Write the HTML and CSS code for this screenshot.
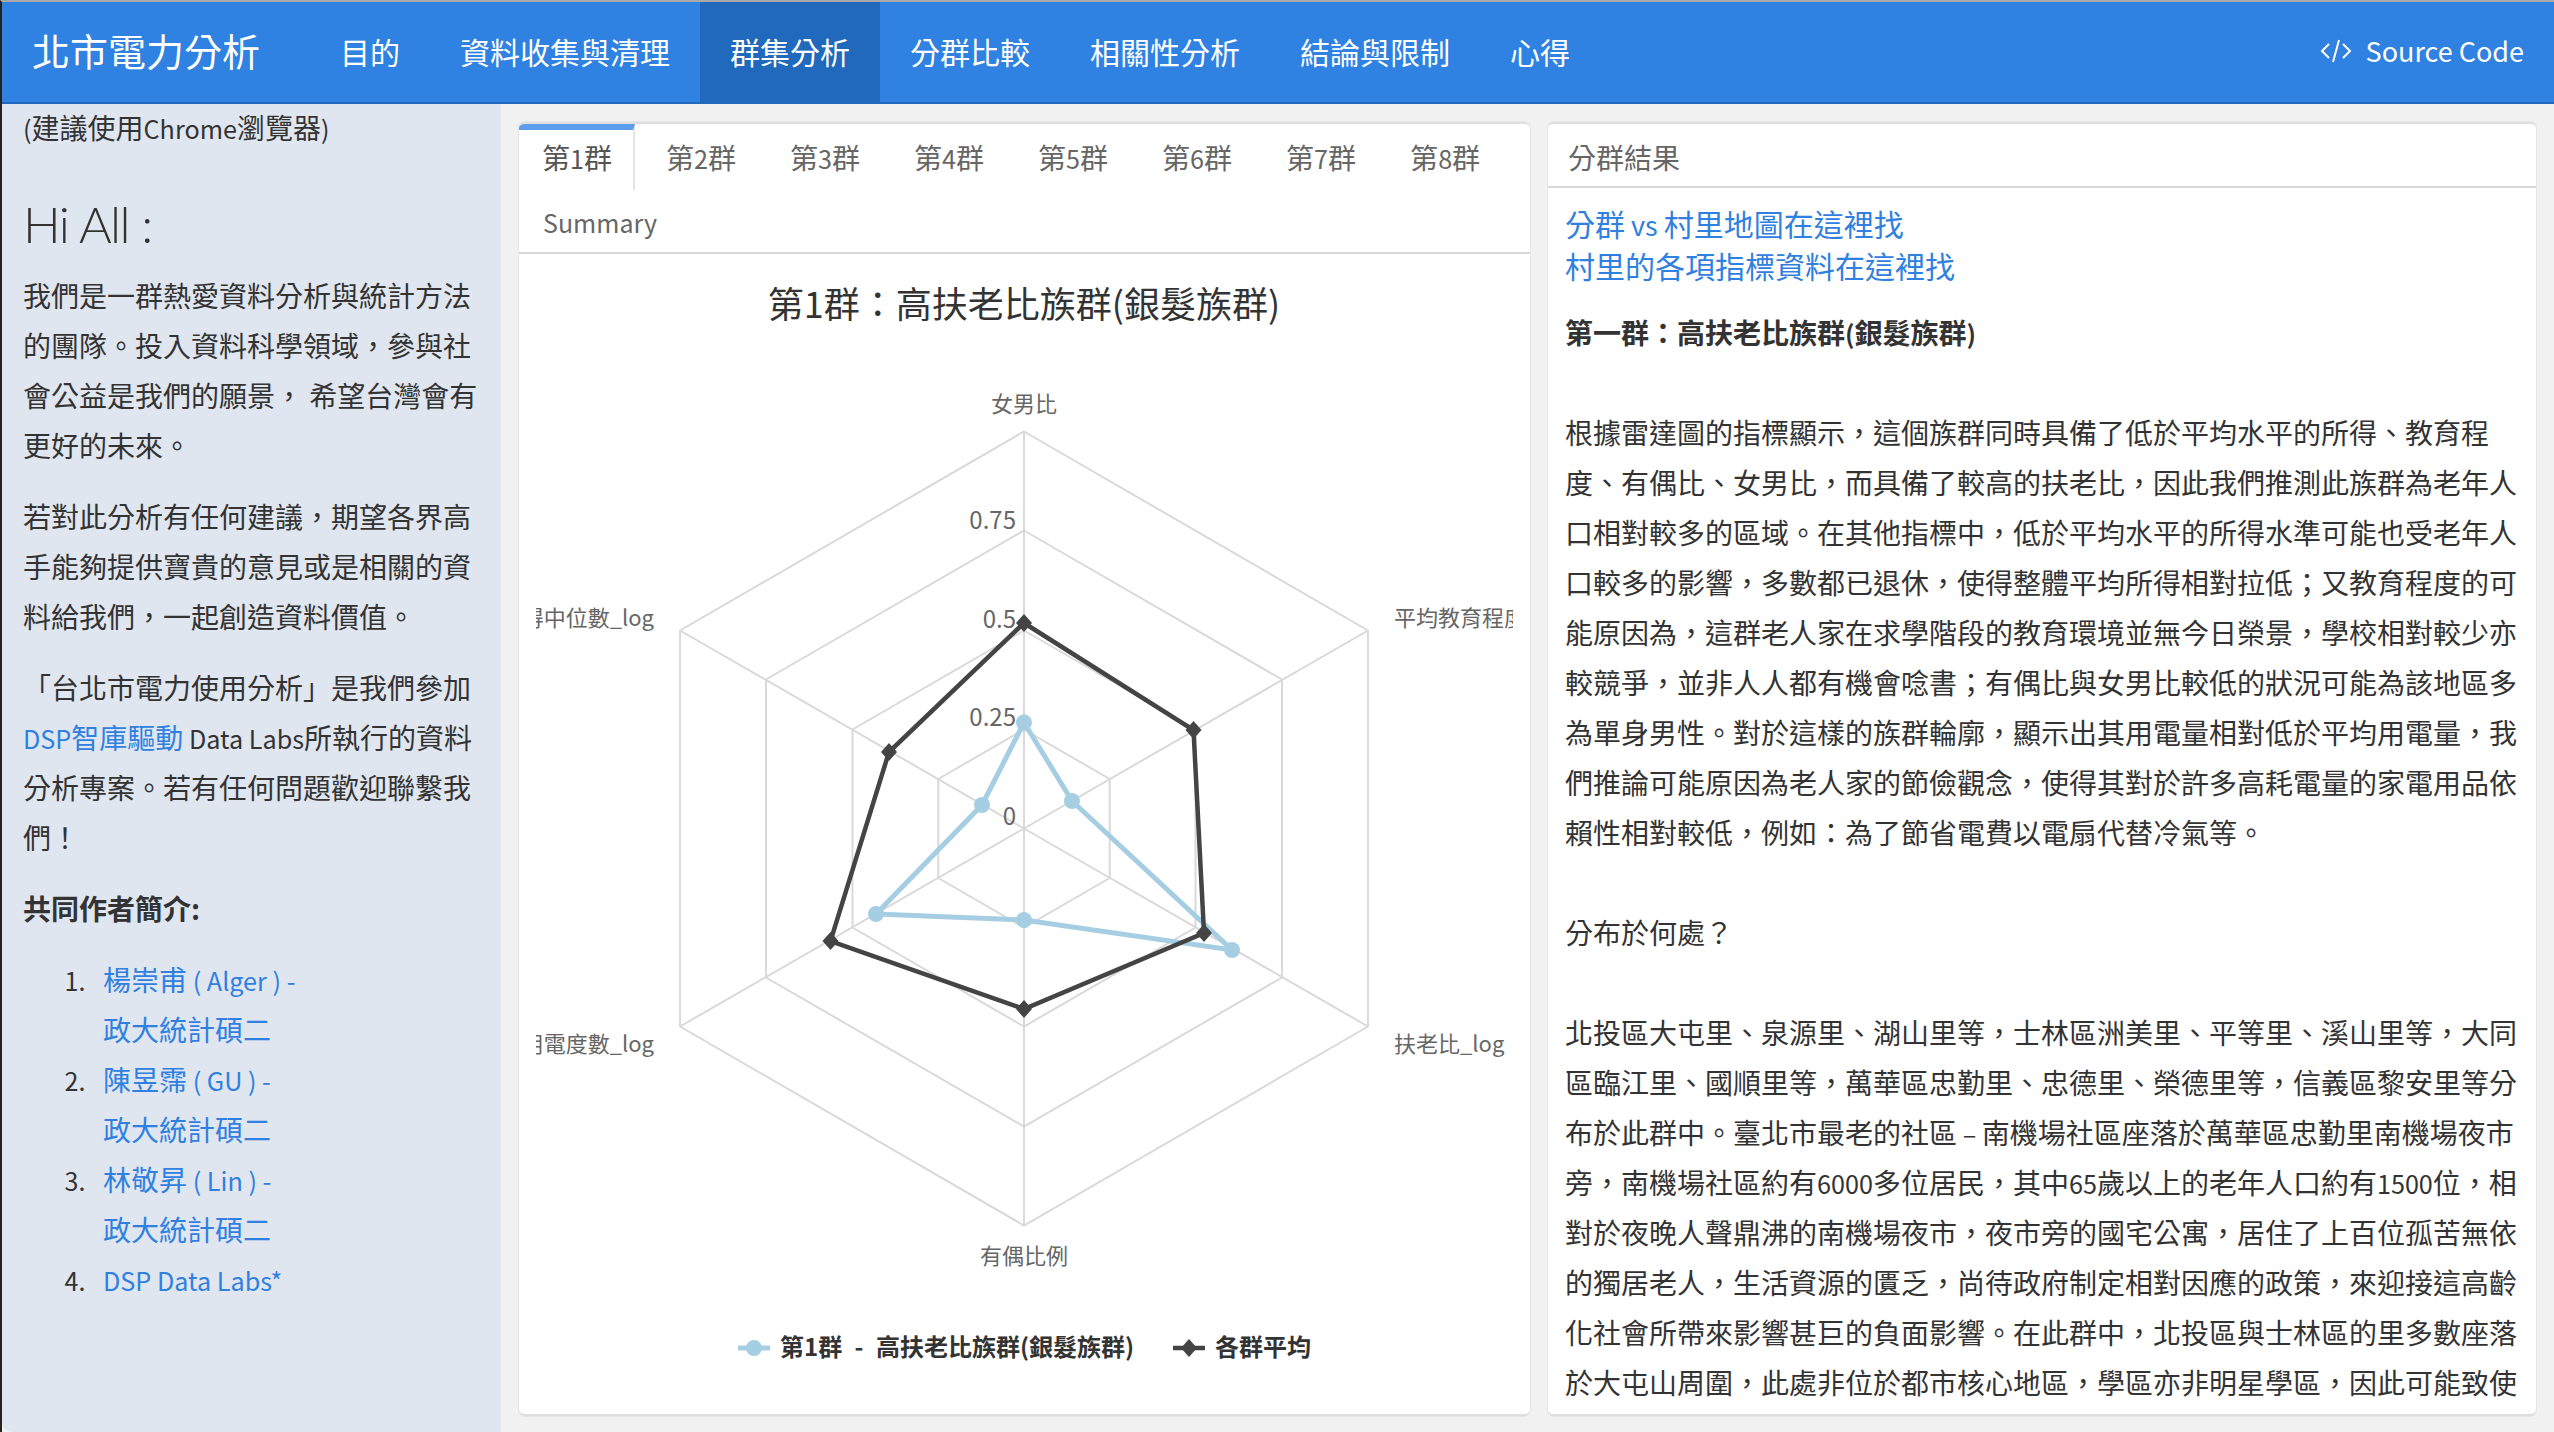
FILE: index.html
```html
<!DOCTYPE html>
<html lang="zh-Hant">
<head>
    <meta charset="UTF-8">
    <title>北市電力分析</title>
    <link rel="stylesheet" href="styles.css">
</head>
<body>

<!-- Barra superior -->
<header class="navbar">
    <a class="brand">北市電力分析</a>
    <nav class="menu">
        <a>目的</a>
        <a>資料收集與清理</a>
        <a class="active">群集分析</a>
        <a>分群比較</a>
        <a>相關性分析</a>
        <a>結論與限制</a>
        <a>心得</a>
    </nav>
    <a class="source">
        <svg class="code-icon" viewBox="0 0 32 26" width="32" height="26">
            <path d="M9 6 L2 13 L9 20 M23 6 L30 13 L23 20 M19 2 L13 24" fill="none" stroke="#fff" stroke-width="2"/>
        </svg>
        <span>Source Code</span>
    </a>
</header>

<div class="page">
    <!-- Columna izquierda -->
    <aside class="sidebar">
        <div class="hint"><span class="lat">(</span>建議使用<span class="lat">Chrome</span>瀏覽器<span class="lat">)</span></div>
        <h3 class="hello">Hi All :</h3>
        <p>我們是一群熱愛資料分析與統計方法的團隊。投入資料科學領域，參與社會公益是我們的願景， 希望台灣會有更好的未來。</p>
        <p>若對此分析有任何建議，期望各界高手能夠提供寶貴的意見或是相關的資料給我們，一起創造資料價值。</p>
        <p>「台北市電力使用分析」是我們參加 <a><span class="lat">DSP</span>智庫驅動</a><span class="lat"> Data Labs</span>所執行的資料分析專案。若有任何問題歡迎聯繫我們！</p>
        <p class="authors-title">共同作者簡介:</p>
        <ol class="authors">
            <li><a>楊崇甫<span class="lat"> ( Alger ) -</span><br>政大統計碩二</a></li>
            <li><a>陳昱霈<span class="lat"> ( GU ) -</span><br>政大統計碩二</a></li>
            <li><a>林敬昇<span class="lat"> ( Lin ) -</span><br>政大統計碩二</a></li>
            <li><a class="lat">DSP Data Labs*</a></li>
        </ol>
    </aside>

    <!-- Panel del radar -->
    <section class="box chart-box">
        <ul class="tabs">
            <li class="current">第<span class="lat">1</span>群</li>
            <li>第<span class="lat">2</span>群</li>
            <li>第<span class="lat">3</span>群</li>
            <li>第<span class="lat">4</span>群</li>
            <li>第<span class="lat">5</span>群</li>
            <li>第<span class="lat">6</span>群</li>
            <li>第<span class="lat">7</span>群</li>
            <li>第<span class="lat">8</span>群</li>
            <li class="summary">Summary</li>
        </ul>
        <svg class="radar" viewBox="536 254 977 1162" width="977" height="1162">
            <text class="chart-title" x="1024" y="318" text-anchor="middle">第1群：高扶老比族群(銀髮族群)</text>

            <g class="grid">
                <polygon points="1024,431.5 1368,630.5 1368,1026.5 1024,1225.5 680,1026.5 680,630.5"/>
                <polygon points="1024,530.5 1282,679.5 1282,977.5 1024,1126.5 766,977.5 766,679.5"/>
                <polygon points="1024,630.5 1195.5,729.5 1195.5,927.5 1024,1026.5 852.5,927.5 852.5,729.5"/>
                <polygon points="1024,729.5 1109.7,779 1109.7,878 1024,927.5 938.3,878 938.3,779"/>
                <path d="M1024 828.5 L1024 431.5 M1024 828.5 L1368 630.5 M1024 828.5 L1368 1026.5 M1024 828.5 L1024 1225.5 M1024 828.5 L680 1026.5 M1024 828.5 L680 630.5"/>
            </g>

            <g class="ticks" text-anchor="end">
                <text x="1016" y="529">0.75</text>
                <text x="1016" y="628">0.5</text>
                <text x="1016" y="726">0.25</text>
                <text x="1016" y="825">0</text>
            </g>

            <g class="axis">
                <text x="1024" y="412" text-anchor="middle">女男比</text>
                <text x="1394" y="626">平均教育程度</text>
                <text x="1394" y="1052">扶老比_log</text>
                <text x="1024" y="1264" text-anchor="middle">有偶比例</text>
                <text x="654" y="1052" text-anchor="end">用電度數_log</text>
                <text x="654" y="626" text-anchor="end">所得中位數_log</text>
            </g>

            <polygon class="line-blue" points="1024,722.5 1072,801 1232,950 1024,920 876,914 982,805"/>
            <g class="dots-blue">
                <circle cx="1024" cy="722.5" r="8"/>
                <circle cx="1072" cy="801" r="8"/>
                <circle cx="1232" cy="950" r="8"/>
                <circle cx="1024" cy="920" r="8"/>
                <circle cx="876" cy="914" r="8"/>
                <circle cx="982" cy="805" r="8"/>
            </g>

            <polygon class="line-dark" points="1024,623 1193.5,730 1204,933 1024,1009 830.5,941 889,752"/>
            <g class="dots-dark">
                <polygon points="1024,614 1032,623 1024,632 1016,623"/>
                <polygon points="1193.5,721 1201.5,730 1193.5,739 1185.5,730"/>
                <polygon points="1204,924 1212,933 1204,942 1196,933"/>
                <polygon points="1024,1000 1032,1009 1024,1018 1016,1009"/>
                <polygon points="830.5,932 838.5,941 830.5,950 822.5,941"/>
                <polygon points="889,743 897,752 889,761 881,752"/>
            </g>

            <g class="legend">
                <path class="line-blue" d="M738 1348 L770 1348"/>
                <circle class="dots-blue" cx="754" cy="1348" r="8"/>
                <text x="780" y="1356">第1群 - 高扶老比族群(銀髮族群)</text>
                <path class="line-dark" d="M1173 1348 L1205 1348"/>
                <polygon class="dots-dark" points="1189,1339 1197,1348 1189,1357 1181,1348"/>
                <text x="1215" y="1356">各群平均</text>
            </g>
        </svg>
    </section>

    <!-- Panel de resultados -->
    <section class="box result-box">
        <div class="box-header">分群結果</div>
        <div class="box-body">
            <div class="big-links">
                <a>分群<span class="lat"> vs </span>村里地圖在這裡找</a><br>
                <a>村里的各項指標資料在這裡找</a>
            </div>
            <p class="result-title">第一群：高扶老比族群<span class="lat">(</span>銀髮族群<span class="lat">)</span></p>
            <p>根據雷達圖的指標顯示，這個族群同時具備了低於平均水平的所得、教育程度、有偶比、女男比，而具備了較高的扶老比，因此我們推測此族群為老年人口相對較多的區域。在其他指標中，低於平均水平的所得水準可能也受老年人口較多的影響，多數都已退休，使得整體平均所得相對拉低；又教育程度的可能原因為，這群老人家在求學階段的教育環境並無今日榮景，學校相對較少亦較競爭，並非人人都有機會唸書；有偶比與女男比較低的狀況可能為該地區多為單身男性。對於這樣的族群輪廓，顯示出其用電量相對低於平均用電量，我們推論可能原因為老人家的節儉觀念，使得其對於許多高耗電量的家電用品依賴性相對較低，例如：為了節省電費以電扇代替冷氣等。</p>
            <p>分布於何處？</p>
            <p>北投區大屯里、泉源里、湖山里等，士林區洲美里、平等里、溪山里等，大同區臨江里、國順里等，萬華區忠勤里、忠德里、榮德里等，信義區黎安里等分布於此群中。臺北市最老的社區<span class="lat"> – </span>南機場社區座落於萬華區忠勤里南機場夜市旁，南機場社區約有<span class="lat">6000</span>多位居民，其中<span class="lat">65</span>歲以上的老年人口約有<span class="lat">1500</span>位，相對於夜晚人聲鼎沸的南機場夜市，夜市旁的國宅公寓，居住了上百位孤苦無依的獨居老人，生活資源的匱乏，尚待政府制定相對因應的政策，來迎接這高齡化社會所帶來影響甚巨的負面影響。在此群中，北投區與士林區的里多數座落於大屯山周圍，此處非位於都市核心地區，學區亦非明星學區，因此可能致使</p>
        </div>
    </section>
</div>

</body>
</html>
```

FILE: styles.css
```css
html, body {
    height: 100%;
}

body {
    margin: 0;
    height: 1432px;
    box-sizing: border-box;
    border-top: 2px solid #a8a8a8;
    border-left: 2px solid #222;
    display: flex;
    flex-direction: column;
    overflow: hidden;
    background-color: #f1f1f1;
    color: #333;
    font-family: "Noto Sans CJK TC", "Noto Sans", sans-serif;
    font-size: 28px;
    line-height: 50px;
}

a {
    color: #2f80e0;
}

/* letras latinas un poco mas chicas que el CJK */
.lat {
    font-size: 0.9em;
    line-height: 1;
}

/* Barra superior */
.navbar {
    flex: none;
    height: 102px;
    box-sizing: border-box;
    display: flex;
    align-items: stretch;
    background-color: #2f81e2;
    border-bottom: 2px solid #2069bd;
    color: #fff;
}

.navbar a {
    color: #fff;
    display: flex;
    align-items: center;
    padding-bottom: 5px;
    box-sizing: border-box;
}

.brand {
    width: 308px;
    padding-left: 30px;
    font-size: 38px;
}

.menu {
    display: flex;
    flex: 1;
    font-size: 30px;
}

.menu a {
    padding: 0 30px 5px;
    margin-bottom: -2px;
}

.menu a.active {
    background-color: #2069bd;
}

.navbar a.source {
    padding: 0 30px 3px 0;
    gap: 14px;
    font-size: 27px;
}

/* Columnas */
.page {
    flex: 1;
    min-height: 0;
    display: flex;
    gap: 18px;
    padding-right: 18px;
}

.sidebar {
    width: 499px;
    flex: none;
    box-sizing: border-box;
    padding: 0 21px;
    background-color: #dfe6ef;
    border-bottom-left-radius: 10px;
}

.hint {
    line-height: 46px;
}

.hello {
    margin: 44px 0 16px;
    font-family: Lato, "Noto Sans", sans-serif;
    font-size: 50px;
    font-weight: 300;
    letter-spacing: -1.5px;
    line-height: 60px;
}

.sidebar p {
    margin: 0 0 21px;
}

.authors-title {
    font-weight: bold;
}

.authors {
    margin: 0;
    padding-left: 68px;
}

.authors li {
    padding-left: 12px;
}

.authors li::marker {
    font-size: 25px;
}

.box {
    margin: 18px 0 16px;
    box-sizing: border-box;
    background-color: #fff;
    border-top: 2px solid #dedede;
    border-bottom: 2px solid #dedede;
    border-radius: 6px;
    box-shadow: 0 0 0 1px #e6e6e6;
    overflow: hidden;
}

/* Panel del radar */
.chart-box {
    width: 1011px;
    flex: none;
}

.tabs {
    list-style: none;
    margin: 0;
    padding: 0;
    display: flex;
    flex-wrap: wrap;
    align-content: flex-start;
    height: 130px;
    box-sizing: border-box;
    border-bottom: 2px solid #d8d8d8;
    color: #666;
    line-height: 54px;
}

.tabs li {
    padding: 6px 21px 0 23px;
    margin-right: 10px;
    height: 66px;
    box-sizing: border-box;
}

.tabs li.summary {
    font-size: 25px;
    line-height: 52px;
    padding-left: 24px;
}

.tabs li.current {
    border-top: 6px solid #5c9ded;
    border-right: 2px solid #e4e4e4;
    padding-top: 0;
    margin-right: 8px;
    color: #555;
}

.radar {
    display: block;
    margin: 0 auto;
}

.grid polygon, .grid path {
    fill: none;
    stroke: #d9d9d9;
    stroke-width: 2;
}

.chart-title {
    font-size: 36px;
    fill: #333;
}

.ticks text {
    font-size: 24px;
    fill: #666;
}

.axis text {
    font-size: 22px;
    fill: #666;
}

.line-blue {
    fill: none;
    stroke: #a6cee3;
    stroke-width: 5;
}

.dots-blue {
    fill: #a6cee3;
}

.line-dark {
    fill: none;
    stroke: #444;
    stroke-width: 4.5;
}

.dots-dark {
    fill: #444;
}

.legend text {
    font-size: 24px;
    font-weight: bold;
    fill: #333;
    word-spacing: 7px;
}

/* Panel de resultados */
.result-box {
    flex: 1;
}

.box-header {
    height: 64px;
    box-sizing: border-box;
    padding-left: 20px;
    line-height: 66px;
    color: #666;
    border-bottom: 2px solid #d8d8d8;
}

.box-body {
    padding: 14px 17px 0;
}

.big-links {
    font-size: 30px;
    line-height: 42px;
    margin-bottom: 21px;
}

.box-body p {
    margin: 0 0 50px;
}

.result-title {
    font-weight: bold;
}
```
